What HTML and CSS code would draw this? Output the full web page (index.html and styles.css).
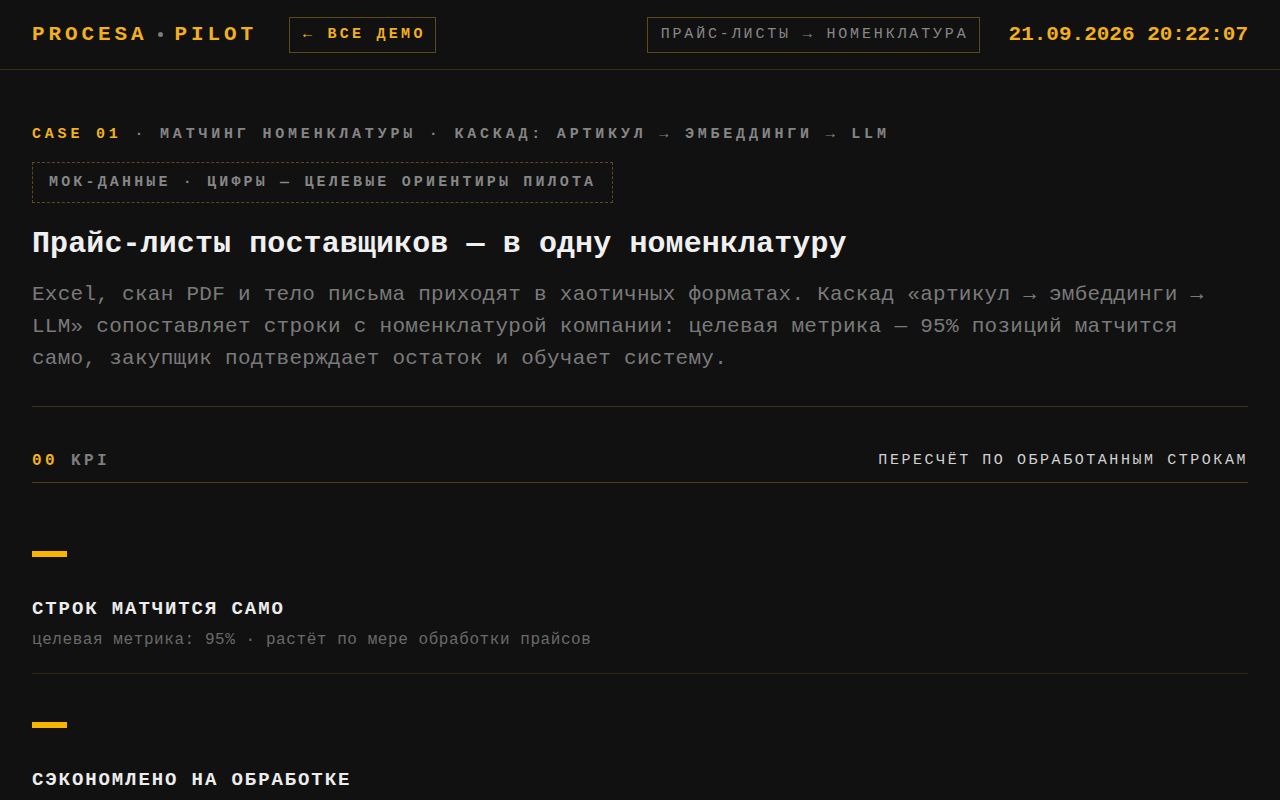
FILE: index.html
```html
<!DOCTYPE html>
<html lang="ru">
<head>
<meta charset="utf-8">
<title>Procesa Pilot — Прайс-листы → номенклатура</title>
<link rel="stylesheet" href="styles.css">
</head>
<body>
<header class="topbar">
  <div class="topbar-left">
    <div class="logo"><span>PROCESA</span><span class="logo-dot"></span><span>PILOT</span></div>
    <a class="back-btn" href="#">← ВСЕ ДЕМО</a>
  </div>
  <div class="topbar-right">
    <div class="case-tag">ПРАЙС-ЛИСТЫ → НОМЕНКЛАТУРА</div>
    <div class="clock">21.09.2026 20:22:07</div>
  </div>
</header>
<main class="page">
  <section class="intro">
    <div class="eyebrow"><span class="eyebrow-num">CASE 01</span> · МАТЧИНГ НОМЕНКЛАТУРЫ · КАСКАД: АРТИКУЛ → ЭМБЕДДИНГИ → LLM</div>
    <div class="mock-note">МОК-ДАННЫЕ · ЦИФРЫ — ЦЕЛЕВЫЕ ОРИЕНТИРЫ ПИЛОТА</div>
    <h1 class="title">Прайс-листы поставщиков — в одну номенклатуру</h1>
    <p class="lead">Excel, скан PDF и тело письма приходят в хаотичных форматах. Каскад «артикул → эмбеддинги → LLM» сопоставляет строки с номенклатурой компании: целевая метрика — 95% позиций матчится само, закупщик подтверждает остаток и обучает систему.</p>
  </section>
  <section class="kpi">
    <div class="section-head">
      <div class="section-label"><span class="section-num">00</span> KPI</div>
      <div class="section-note">ПЕРЕСЧЁТ ПО ОБРАБОТАННЫМ СТРОКАМ</div>
    </div>
    <div class="kpi-list">
      <div class="kpi-item">
        <div class="kpi-bar"></div>
        <div class="kpi-name">СТРОК МАТЧИТСЯ САМО</div>
        <div class="kpi-sub">целевая метрика: 95% · растёт по мере обработки прайсов</div>
      </div>
      <div class="kpi-item">
        <div class="kpi-bar"></div>
        <div class="kpi-name">СЭКОНОМЛЕНО НА ОБРАБОТКЕ</div>
        <div class="kpi-sub">часы закупщика на ручном сопоставлении строк</div>
      </div>
    </div>
  </section>
</main>
</body>
</html>
```
FILE: styles.css
```css
* { box-sizing: border-box; }

html, body {
  margin: 0;
  padding: 0;
  background: #111111;
}

body {
  font-family: "Liberation Mono", "DejaVu Sans Mono", monospace;
  color: #e6e6e6;
}

.topbar {
  display: flex;
  justify-content: space-between;
  align-items: center;
  height: 70px;
  padding: 0 32px;
  border-bottom: 1px solid #3a3116;
}

.topbar-left,
.topbar-right {
  display: flex;
  align-items: center;
}

.topbar-left { gap: 32px; }
.topbar-right { gap: 29px; }

.logo {
  display: flex;
  align-items: center;
  font-size: 21px;
  font-weight: 700;
  letter-spacing: 3.9px;
  color: #f2b01e;
}

.logo-dot {
  width: 5px;
  height: 5px;
  border-radius: 50%;
  background: #7c7c7c;
  margin: 0 12px 0 10px;
}

.back-btn {
  display: flex;
  align-items: center;
  height: 36px;
  padding: 0 9px 0 13px;
  border: 1px solid #5b4a1a;
  font-size: 15px;
  font-weight: 700;
  letter-spacing: 3.26px;
  color: #f2b01e;
  text-decoration: none;
}

.case-tag {
  display: flex;
  align-items: center;
  height: 36px;
  padding: 0 10px 0 13px;
  border: 1px solid #5b4a1a;
  font-size: 15px;
  letter-spacing: 2.84px;
  color: #888888;
}

.clock {
  font-size: 21px;
  font-weight: 700;
  letter-spacing: 0;
  color: #f2b01e;
}

.page {
  padding: 55px 32px 0;
}

.eyebrow {
  font-size: 15px;
  line-height: 20px;
  font-weight: 700;
  letter-spacing: 3.8px;
  color: #858585;
}

.eyebrow-num { color: #f2b01e; }

.mock-note {
  display: inline-block;
  margin-top: 17px;
  padding: 9px 16px;
  border: 1px dashed #5b4a1a;
  font-size: 15px;
  line-height: 21px;
  font-weight: 700;
  letter-spacing: 3.16px;
  color: #868686;
}

.title {
  margin: 21px 0 0;
  font-size: 30px;
  line-height: 40px;
  font-weight: 700;
  letter-spacing: 0.1px;
  color: #f0f0f0;
}

.lead {
  margin: 15px 0 0;
  max-width: 1200px;
  font-size: 21px;
  line-height: 32px;
  letter-spacing: 0.27px;
  color: #7a7a7a;
}

.kpi {
  margin-top: 31px;
  border-top: 1px solid #3a3116;
}

.section-head {
  display: flex;
  justify-content: space-between;
  align-items: center;
  padding: 44px 0 11px;
  border-bottom: 1px solid #4a3d17;
}

.section-label {
  font-size: 16px;
  line-height: 20px;
  font-weight: 700;
  letter-spacing: 3.4px;
  color: #7f7f7f;
}

.section-num { color: #f2b01e; }

.section-note {
  font-size: 15px;
  line-height: 20px;
  letter-spacing: 2.55px;
  color: #d2d2d2;
}

.kpi-list {
  padding-top: 20px;
}

.kpi-item {
  padding: 48px 0 22px;
  border-bottom: 1px solid #2e2813;
}

.kpi-bar {
  width: 35px;
  height: 6px;
  background: #f7b500;
}

.kpi-name {
  margin-top: 40px;
  font-size: 19px;
  line-height: 24px;
  font-weight: 700;
  letter-spacing: 1.9px;
  color: #ececec;
}

.kpi-sub {
  margin-top: 8px;
  font-size: 16px;
  line-height: 22px;
  letter-spacing: 0.57px;
  color: #6a6a6a;
}
```
